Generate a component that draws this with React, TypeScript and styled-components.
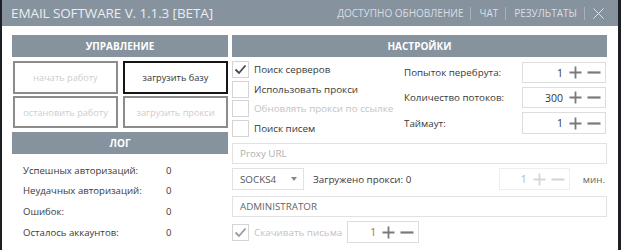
import styled, { createGlobalStyle } from 'styled-components'

const GlobalStyle = createGlobalStyle`
  html, body {
    margin: 0;
    padding: 0;
    background: #1d1f24;
    font-family: 'Open Sans', 'Noto Sans', sans-serif;
  }
`

const colors = {
  bar: '#86929e',
  text: '#3a3a3a',
}

const Window = styled.div`
  width: 616px;
  height: 250px;
  margin-left: 2px;
  background: #fff;
  display: flex;
  flex-direction: column;
  overflow: hidden;
`

const TitleBar = styled.div`
  height: 26px;
  flex: none;
  background: ${colors.bar};
  display: flex;
  align-items: center;
  justify-content: space-between;
  padding: 0 14px 0 9px;
`

const Title = styled.div`
  color: #e9edf0;
  font-size: 13.5px;
  letter-spacing: -0.1px;
`

const TitleMenu = styled.div`
  display: flex;
  align-items: center;
  gap: 7px;
  font-size: 10px;
  color: #d9dee3;
`

const Sep = styled.span`
  width: 1px;
  height: 13px;
  background: #a7b1ba;
  margin-right: 1px;
`

const Body = styled.div`
  display: grid;
  grid-template-columns: 216px 375px;
  column-gap: 4px;
  padding: 9px 0 0 10px;
  font-size: 9.8px;
`

const Column = styled.div`
  display: flex;
  flex-direction: column;
`

const SectionHead = styled.div<{ $top?: number }>`
  height: 22px;
  margin-top: ${(p) => p.$top ?? 0}px;
  background: ${colors.bar};
  color: #fff;
  font-weight: 700;
  font-size: 10px;
  display: flex;
  align-items: center;
  justify-content: center;
`

const ButtonGrid = styled.div`
  display: grid;
  grid-template-columns: 1fr 1fr;
  grid-template-rows: 33px 32px;
  gap: 2px 5px;
  margin-top: 4px;
  padding-left: 1px;
`

const ActionButton = styled.button<{ $active?: boolean }>`
  font-family: inherit;
  font-size: 9.2px;
  background: #fff;
  border: 2px solid ${(p) => (p.$active ? '#151515' : '#8c8c8c')};
  color: ${(p) => (p.$active ? '#333' : '#cdcdcd')};
  padding: 0;
`

const LogList = styled.div`
  padding: 6px 0 0 11px;
`

const LogRow = styled.div`
  height: 20.6px;
  display: grid;
  grid-template-columns: 143px auto;
  align-items: center;
  font-size: 9.6px;
  color: ${colors.text};
`

const TopArea = styled.div`
  display: grid;
  grid-template-columns: 172px 1fr;
  margin-top: 3px;
`

const CheckList = styled.div`
  display: flex;
  flex-direction: column;
`

const CheckRow = styled.label<{ $disabled?: boolean }>`
  height: 19.5px;
  display: flex;
  align-items: center;
  gap: 5px;
  color: ${(p) => (p.$disabled ? '#c4c4c4' : colors.text)};
`

const Box = styled.span`
  width: 15px;
  height: 15px;
  border: 1px solid #d4d4d4;
  display: flex;
  align-items: center;
  justify-content: center;
  flex: none;
`

const FieldList = styled.div`
  display: flex;
  flex-direction: column;
  gap: 4px;
  padding-top: 2px;
`

const FieldRow = styled.div`
  display: grid;
  grid-template-columns: 118px 84px;
  align-items: center;
  color: ${colors.text};
`

const NumBox = styled.div<{ $w: number; $h: number; $disabled?: boolean }>`
  width: ${(p) => p.$w}px;
  height: ${(p) => p.$h}px;
  box-sizing: border-box;
  border: 1px solid ${(p) => (p.$disabled ? '#eeeeee' : '#dddddd')};
  display: flex;
  align-items: center;
  justify-content: flex-end;
  gap: 5px;
  padding-right: 4px;
  flex: none;
`

const NumValue = styled.span<{ $color: string }>`
  font-size: 10.5px;
  color: ${(p) => p.$color};
  margin-right: 1px;
`

const TextInput = styled.div<{ $top: number; $color: string }>`
  height: 21px;
  margin-top: ${(p) => p.$top}px;
  border: 1px solid #e2e2e2;
  box-sizing: border-box;
  display: flex;
  align-items: center;
  padding-left: 7px;
  color: ${(p) => p.$color};
`

const ProxyRow = styled.div`
  margin-top: 4px;
  display: flex;
  align-items: center;
  color: ${colors.text};
`

const Select = styled.div`
  width: 72px;
  height: 22px;
  box-sizing: border-box;
  border: 1px solid #e2e2e2;
  display: flex;
  align-items: center;
  justify-content: space-between;
  padding: 0 6px 0 7px;
  margin-right: 9px;
  color: #555;
`

const Caret = styled.span`
  width: 0;
  height: 0;
  border-left: 3px solid transparent;
  border-right: 3px solid transparent;
  border-top: 4px solid #888;
`

const Grow = styled.span`
  flex: 1;
`

const Unit = styled.span`
  color: #666;
  margin-left: 13px;
  margin-right: 2px;
`

const BottomRow = styled.div`
  margin-top: 4px;
  display: flex;
  align-items: center;
  gap: 5px;
  color: #c2c2c2;
`

const Check = ({ color }: { color: string }) => (
  <svg width="13" height="11" viewBox="0 0 13 11">
    <path d="M1.5 5.5 L5 9 L11.5 1.5" fill="none" stroke={color} strokeWidth="1.8" />
  </svg>
)

const Plus = ({ color }: { color: string }) => (
  <svg width="13" height="13" viewBox="0 0 13 13">
    <path d="M6.5 0.5 V12.5 M0.5 6.5 H12.5" stroke={color} strokeWidth="1.8" />
  </svg>
)

const Minus = ({ color }: { color: string }) => (
  <svg width="14" height="13" viewBox="0 0 14 13">
    <path d="M0.5 6.5 H13.5" stroke={color} strokeWidth="2.2" />
  </svg>
)

const Close = () => (
  <svg width="11" height="11" viewBox="0 0 11 11">
    <path d="M0.5 0.5 L10.5 10.5 M10.5 0.5 L0.5 10.5" stroke="#dfe3e7" strokeWidth="1" />
  </svg>
)

type NumProps = {
  value: number
  w: number
  h: number
  disabled?: boolean
  valueColor?: string
}

const NumberField = ({ value, w, h, disabled, valueColor }: NumProps) => {
  const icon = disabled ? '#d6d6d6' : '#7a7a7a'
  return (
    <NumBox $w={w} $h={h} $disabled={disabled}>
      <NumValue $color={valueColor ?? (disabled ? '#b4b4b4' : '#333')}>{value}</NumValue>
      <Plus color={icon} />
      <Minus color={icon} />
    </NumBox>
  )
}

const checks = [
  { label: 'Поиск серверов', checked: true },
  { label: 'Использовать прокси' },
  { label: 'Обновлять прокси по ссылке', disabled: true },
  { label: 'Поиск писем' },
]

const fields = [
  { label: 'Попыток перебрута:', value: 1, h: 21 },
  { label: 'Количество потоков:', value: 300, h: 21 },
  { label: 'Таймаут:', value: 1, h: 22 },
]

const logs = [
  'Успешных авторизаций:',
  'Неудачных авторизаций:',
  'Ошибок:',
  'Осталось аккаунтов:',
]

const App = () => {
  return (
    <>
      <GlobalStyle />
      <Window>
        <TitleBar>
          <Title>EMAIL SOFTWARE V. 1.1.3 [BETA]</Title>
          <TitleMenu>
            <span>ДОСТУПНО ОБНОВЛЕНИЕ</span>
            <Sep />
            <span>ЧАТ</span>
            <Sep />
            <span>РЕЗУЛЬТАТЫ</span>
            <Sep />
            <Close />
          </TitleMenu>
        </TitleBar>
        <Body>
          <Column>
            <SectionHead>УПРАВЛЕНИЕ</SectionHead>
            <ButtonGrid>
              <ActionButton>начать работу</ActionButton>
              <ActionButton $active>загрузить базу</ActionButton>
              <ActionButton>остановить работу</ActionButton>
              <ActionButton>загрузить прокси</ActionButton>
            </ButtonGrid>
            <SectionHead $top={4}>ЛОГ</SectionHead>
            <LogList>
              {logs.map((l) => (
                <LogRow key={l}>
                  <span>{l}</span>
                  <span>0</span>
                </LogRow>
              ))}
            </LogList>
          </Column>
          <Column>
            <SectionHead>НАСТРОЙКИ</SectionHead>
            <TopArea>
              <CheckList>
                {checks.map((c) => (
                  <CheckRow key={c.label} $disabled={c.disabled}>
                    <Box>{c.checked && <Check color="#4a4a4a" />}</Box>
                    {c.label}
                  </CheckRow>
                ))}
              </CheckList>
              <FieldList>
                {fields.map((f) => (
                  <FieldRow key={f.label}>
                    <span>{f.label}</span>
                    <NumberField value={f.value} w={84} h={f.h} />
                  </FieldRow>
                ))}
              </FieldList>
            </TopArea>
            <TextInput $top={5} $color="#b0b0b0">Proxy URL</TextInput>
            <ProxyRow>
              <Select>
                SOCKS4
                <Caret />
              </Select>
              <span>Загружено прокси: 0</span>
              <Grow />
              <NumberField value={1} w={71} h={22} disabled />
              <Unit>мин.</Unit>
            </ProxyRow>
            <TextInput $top={6} $color="#666">ADMINISTRATOR</TextInput>
            <BottomRow>
              <Box>
                <Check color="#9a9a9a" />
              </Box>
              <span>Скачивать письма</span>
              <NumberField value={1} w={72} h={22} valueColor="#b0692e" />
            </BottomRow>
          </Column>
        </Body>
      </Window>
    </>
  )
}

export default App
